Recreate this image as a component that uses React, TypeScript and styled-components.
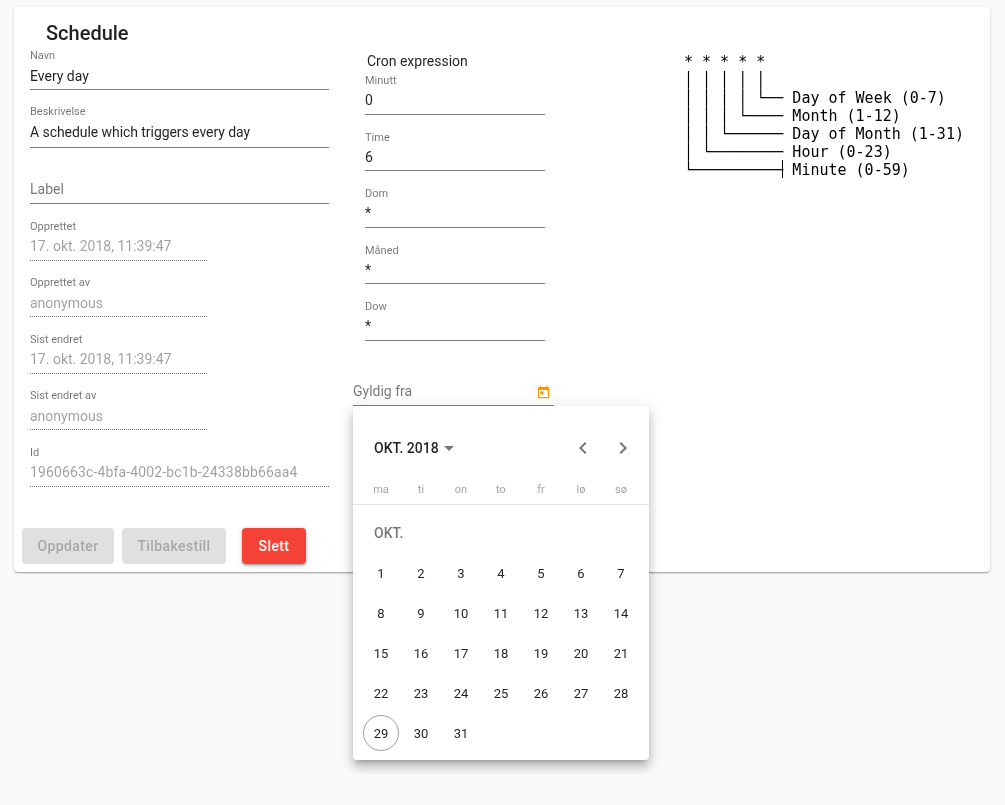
import React from "react";
import styled, { createGlobalStyle } from "styled-components";

const GlobalStyle = createGlobalStyle`
  html, body {
    margin: 0;
    height: 100%;
    background: #fafafa;
    font-family: Roboto, "Liberation Sans", sans-serif;
    color: rgba(0, 0, 0, 0.87);
  }
`;

const Page = styled.div`
  padding: 7px 15px 0 14px;
  will-change: transform;
`;

const Card = styled.section`
  position: relative;
  box-sizing: border-box;
  height: 565px;
  background: #fff;
  border-radius: 4px;
  box-shadow: 0 1px 3px rgba(0, 0, 0, 0.2), 0 1px 1px rgba(0, 0, 0, 0.14), 0 2px 1px -1px rgba(0, 0, 0, 0.12);
`;

const Columns = styled.div`
  display: flex;
  padding-left: 16px;
`;

const LeftColumn = styled.div`
  width: 299px;
`;

const Title = styled.h2`
  margin: 0;
  padding: 13px 0 0 32px;
  height: 26px;
  font-size: 20px;
  line-height: 26px;
  font-weight: 500;
`;

const MiddleColumn = styled.div`
  width: 201px;
  margin-left: 24px;
  padding-top: 5px;
`;

const CronTitle = styled.div`
  padding-left: 14px;
  font-size: 14px;
  line-height: 20px;
`;

const CronFields = styled.div`
  margin-left: 12px;
  width: 180px;
`;

const Field = styled.div<{ $height?: number; $width?: number }>`
  display: flex;
  flex-direction: column;
  justify-content: flex-end;
  box-sizing: border-box;
  height: ${(p) => p.$height ?? 56.5}px;
  width: ${(p) => (p.$width ? `${p.$width}px` : "100%")};
`;

const FieldLabel = styled.label`
  margin-bottom: -0.2px;
  font-size: 11px;
  line-height: 13px;
  color: rgba(0, 0, 0, 0.54);
`;

const Value = styled.div<{
  $disabled?: boolean;
  $placeholder?: boolean;
  $multiline?: boolean;
  $tracking?: number;
  $top?: number;
}>`
  box-sizing: border-box;
  height: ${(p) => (p.$multiline ? 30 : 28)}px;
  padding-top: ${(p) => p.$top ?? 3.6}px;
  font-size: 14px;
  line-height: 20px;
  white-space: nowrap;
  letter-spacing: ${(p) => p.$tracking ?? 0}px;
  color: ${(p) =>
    p.$disabled ? "rgba(0, 0, 0, 0.38)" : p.$placeholder ? "rgba(0, 0, 0, 0.54)" : "rgba(0, 0, 0, 0.87)"};
  border-bottom: 1px ${(p) => (p.$disabled ? "dotted rgba(0, 0, 0, 0.55)" : "solid rgba(0, 0, 0, 0.5)")};
`;

const Actions = styled.div`
  display: flex;
  margin: 41px 0 0 -8px;
  gap: 8px;
`;

const Button = styled.button<{ $danger?: boolean; $width: number }>`
  width: ${(p) => p.$width}px;
  height: 36px;
  padding: 0;
  border: 0;
  border-radius: 4px;
  font-family: inherit;
  font-size: 14px;
  font-weight: 500;
  letter-spacing: 0.4px;
  color: ${(p) => (p.$danger ? "#fff" : "rgba(0, 0, 0, 0.26)")};
  background: ${(p) => (p.$danger ? "#f44336" : "rgba(0, 0, 0, 0.12)")};
  box-shadow: ${(p) =>
    p.$danger ? "0 1px 5px rgba(0,0,0,.2), 0 2px 2px rgba(0,0,0,.14), 0 3px 1px -2px rgba(0,0,0,.12)" : "none"};
  margin-left: ${(p) => (p.$danger ? "8px" : "0")};
`;

const CronDiagram = styled.div`
  margin: 7px 0 0 130px;
  font-family: "DejaVu Sans Mono", monospace;
  font-size: 15px;
  line-height: 18px;
  color: #000;
`;

const DiagramLine = styled.div`
  height: 18px;
  white-space: pre;
`;

const Tick = styled.span`
  position: relative;

  &::after {
    content: "";
    position: absolute;
    left: -1px;
    top: -1px;
    width: 1px;
    height: 18px;
    background: #000;
  }
`;

const DateField = styled.div`
  box-sizing: border-box;
  display: flex;
  align-items: flex-end;
  justify-content: space-between;
  width: 201px;
  height: 34px;
  margin-top: 31px;
  padding: 0 3px 4px 0;
  border-bottom: 1px solid rgba(0, 0, 0, 0.5);
  font-size: 14px;
  line-height: 20px;
  color: rgba(0, 0, 0, 0.54);
`;

const DateGlyph = styled.span`
  display: flex;
  margin-bottom: 1px;
`;

const Popover = styled.div`
  position: absolute;
  left: 339px;
  top: 399px;
  width: 296px;
  height: 354px;
  background: #fff;
  border-radius: 4px;
  box-shadow: 0 5px 5px -3px rgba(0, 0, 0, 0.2), 0 8px 10px 1px rgba(0, 0, 0, 0.14), 0 3px 14px 2px rgba(0, 0, 0, 0.12);
`;

const CalendarHead = styled.div`
  box-sizing: border-box;
  display: flex;
  align-items: center;
  height: 77px;
  padding: 7px 14px 0 21px;
  font-size: 14px;
  font-weight: 500;
`;

const Month = styled.span`
  margin-right: -2px;
`;

const NavButtons = styled.div`
  margin-left: auto;
  display: flex;
  gap: 16px;
`;

const Weekdays = styled.div`
  display: grid;
  grid-template-columns: repeat(7, 40px);
  height: 15px;
  padding: 0 8px 6px;
  border-bottom: 1px solid #e0e0e0;
`;

const Weekday = styled.span`
  text-align: center;
  font-size: 11px;
  line-height: 13px;
  color: rgba(0, 0, 0, 0.38);
`;

const MonthLabel = styled.div`
  box-sizing: border-box;
  height: 48px;
  padding: 20px 0 0 21px;
  font-size: 14px;
  font-weight: 500;
  color: rgba(0, 0, 0, 0.54);
`;

const Days = styled.div`
  display: grid;
  grid-template-columns: repeat(7, 40px);
  grid-auto-rows: 40px;
  padding: 0 8px;
`;

const Day = styled.div<{ $today?: boolean }>`
  display: flex;
  align-items: center;
  justify-content: center;
  width: 36px;
  height: 36px;
  margin: 2px;
  box-sizing: border-box;
  border-radius: 50%;
  font-size: 13px;
  border: ${(p) => (p.$today ? "1px solid rgba(0, 0, 0, 0.38)" : "none")};
`;

const Icon = ({ d, size, color }: { d: string; size: number; color: string }) => (
  <svg width={size} height={size} viewBox="0 0 24 24" fill={color}>
    <path d={d} />
  </svg>
);

const infoFields = [
  ["Opprettet", "17. okt. 2018, 11:39:47", 177, 0],
  ["Opprettet av", "anonymous", 177, 0],
  ["Sist endret", "17. okt. 2018, 11:39:47", 177, 0],
  ["Sist endret av", "anonymous", 177, 0],
  ["Id", "1960663c-4bfa-4002-bc1b-24338bb66aa4", 299, 0.14],
] as const;

const cronFields = [
  ["Minutt", "0"],
  ["Time", "6"],
  ["Dom", "*"],
  ["Måned", "*"],
  ["Dow", "*"],
];

const diagramLines = [
  "* * * * *",
  "│ │ │ │ │",
  "│ │ │ │ └── Day of Week (0-7)",
  "│ │ │ └──── Month (1-12)",
  "│ │ └────── Day of Month (1-31)",
  "│ └──────── Hour (0-23)",
];

const weekdays = ["ma", "ti", "on", "to", "fr", "lø", "sø"];
const days = Array.from({ length: 31 }, (_, i) => i + 1);

const App: React.FC = () => (
  <>
    <GlobalStyle />
    <Page>
      <Card>
        <Title>Schedule</Title>
        <Columns>
          <LeftColumn>
            <Field $height={44}>
              <FieldLabel>Navn</FieldLabel>
              <Value>Every day</Value>
            </Field>
            <Field $height={57.7}>
              <FieldLabel>Beskrivelse</FieldLabel>
              <Value $multiline $tracking={-0.06} $top={4}>A schedule which triggers every day</Value>
            </Field>
            <Field>
              <Value $placeholder $top={3}>Label</Value>
            </Field>
            {infoFields.map(([label, value, width, tracking]) => (
              <Field key={label} $width={width}>
                <FieldLabel>{label}</FieldLabel>
                <Value $disabled $tracking={tracking}>{value}</Value>
              </Field>
            ))}
            <Actions>
              <Button $width={92} disabled>Oppdater</Button>
              <Button $width={104} disabled>Tilbakestill</Button>
              <Button $width={64} $danger>Slett</Button>
            </Actions>
          </LeftColumn>
          <MiddleColumn>
            <CronTitle>Cron expression</CronTitle>
            <CronFields>
              {cronFields.map(([label, value], i) => (
                <Field key={label} $height={i === 0 ? 43.9 : 56.5}>
                  <FieldLabel>{label}</FieldLabel>
                  <Value $top={3.2}>{value}</Value>
                </Field>
              ))}
            </CronFields>
            <DateField>
              Gyldig fra
              <DateGlyph>
                <Icon
                  size={15}
                  color="#ff9800"
                  d="M19 3h-1V1h-2v2H8V1H6v2H5c-1.11 0-1.99.9-1.99 2L3 19c0 1.1.89 2 2 2h14c1.1 0 2-.9 2-2V5c0-1.1-.9-2-2-2zm0 16H5V8h14v11zM7 10h5v5H7z"
                />
              </DateGlyph>
            </DateField>
          </MiddleColumn>
          <CronDiagram>
            {diagramLines.map((line) => (
              <DiagramLine key={line}>{line}</DiagramLine>
            ))}
            <DiagramLine>
              └──────────
              <Tick />
              {" Minute (0-59)"}
            </DiagramLine>
          </CronDiagram>
        </Columns>
        <Popover>
          <CalendarHead>
            <Month>OKT. 2018</Month>
            <Icon size={24} color="rgba(0,0,0,0.54)" d="M7 10l5 5 5-5z" />
            <NavButtons>
              <Icon size={24} color="rgba(0,0,0,0.54)" d="M15.41 7.41L14 6l-6 6 6 6 1.41-1.41L10.83 12z" />
              <Icon size={24} color="rgba(0,0,0,0.54)" d="M10 6L8.59 7.41 13.17 12l-4.58 4.59L10 18l6-6z" />
            </NavButtons>
          </CalendarHead>
          <Weekdays>
            {weekdays.map((d) => (
              <Weekday key={d}>{d}</Weekday>
            ))}
          </Weekdays>
          <MonthLabel>OKT.</MonthLabel>
          <Days>
            {days.map((d) => (
              <Day key={d} $today={d === 29}>{d}</Day>
            ))}
          </Days>
        </Popover>
      </Card>
    </Page>
  </>
);

export default App;
